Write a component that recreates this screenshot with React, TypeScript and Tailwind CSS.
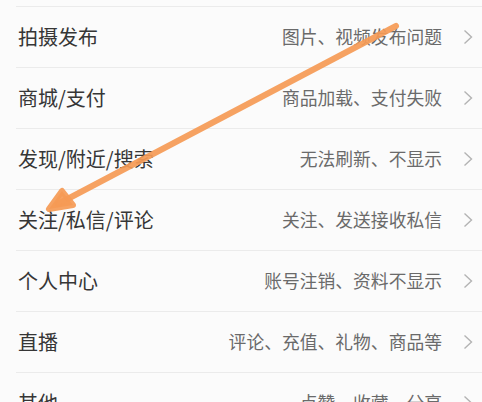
const rows = [
  { title: '拍摄发布', desc: '图片、视频发布问题' },
  { title: '商城/支付', desc: '商品加载、支付失败' },
  { title: '发现/附近/搜索', desc: '无法刷新、不显示' },
  { title: '关注/私信/评论', desc: '关注、发送接收私信' },
  { title: '个人中心', desc: '账号注销、资料不显示' },
  { title: '直播', desc: '评论、充值、礼物、商品等' },
  { title: '其他', desc: '点赞、收藏、分享' },
]

function Chevron() {
  return (
    <svg width="10" height="16" viewBox="0 0 10 16" className="shrink-0">
      <path d="M1.5 1.5 L8.5 8 L1.5 14.5" fill="none" stroke="#b3b3b3" strokeWidth="1.4" />
    </svg>
  )
}

export default function App() {
  return (
    <div
      className="relative w-[482px] h-[402px] overflow-hidden bg-[#fbfbfb]"
      style={{ fontFamily: '"Noto Sans CJK SC", "Noto Sans", sans-serif' }}
    >
      <div className="h-[6px]" />
      {rows.map((row) => (
        <div key={row.title} className="ml-4 h-[61px] border-t border-[#ebebeb] flex items-center pr-[9px]">
          <span className="flex-1 pl-[2px] text-[20px] text-[#363636] leading-none">{row.title}</span>
          <span className="text-[17.8px] text-[#6a6a6a] leading-none mr-[21px]">{row.desc}</span>
          <Chevron />
        </div>
      ))}

      {/* orange annotation arrow */}
      <svg className="absolute inset-0 pointer-events-none" width="482" height="402" viewBox="0 0 482 402">
        <g stroke="#f59a55" strokeOpacity="0.92" strokeWidth="6" strokeLinecap="round" strokeLinejoin="round" fill="#f59a55" fillOpacity="0.92">
          <line x1="396" y1="26" x2="58" y2="204" />
          <polygon points="62,191 49,209 73,205" />
        </g>
      </svg>
    </div>
  )
}
